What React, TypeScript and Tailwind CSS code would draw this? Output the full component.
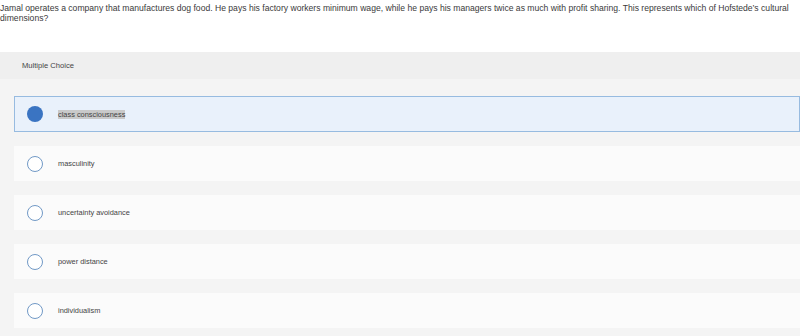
import React from "react";

const options = [
  "class consciousness",
  "masculinity",
  "uncertainty avoidance",
  "power distance",
  "individualism",
];

export default function App() {
  return (
    <div
      className="w-[800px] h-[336px] overflow-hidden bg-white"
      style={{ fontFamily: '"Liberation Sans", Arial, sans-serif' }}
    >
      <div className="h-[52px] pt-[3px] text-[8.6px] leading-[10px] text-[#3a3a3a] whitespace-nowrap">
        Jamal operates a company that manufactures dog food. He pays his factory workers minimum wage, while he pays his managers twice as much with profit sharing. This represents which of Hofstede’s cultural
        <br />
        dimensions?
      </div>
      <div className="h-[27px] bg-[#efefef] flex items-center pl-[22px] text-[7.6px] text-[#444]">
        Multiple Choice
      </div>
      <div className="bg-[#f4f4f4] h-[257px] pt-[17px] pl-[14px] flex flex-col gap-[14px]">
        {options.map((o, i) => {
          const sel = i === 0;
          return (
            <div
              key={o}
              className={
                sel
                  ? "h-[36px] border border-[#97bbe0] bg-[#e9f1fb] flex items-center"
                  : "h-[35px] bg-[#fbfbfb] flex items-center"
              }
            >
              <div className={sel ? "ml-[12px] w-[16px] h-[16px] rounded-full bg-[#3a74c2]" : "ml-[13px] w-[16px] h-[16px] rounded-full border-[1.5px] border-[#7199c6] bg-white"} />
              <span
                className={
                  sel
                    ? "ml-[15px] text-[7.4px] text-[#444] bg-[#c9c9c9] leading-[9px]"
                    : "ml-[15px] text-[7.4px] text-[#444] leading-[9px]"
                }
              >
                {o}
              </span>
            </div>
          );
        })}
      </div>
    </div>
  );
}
